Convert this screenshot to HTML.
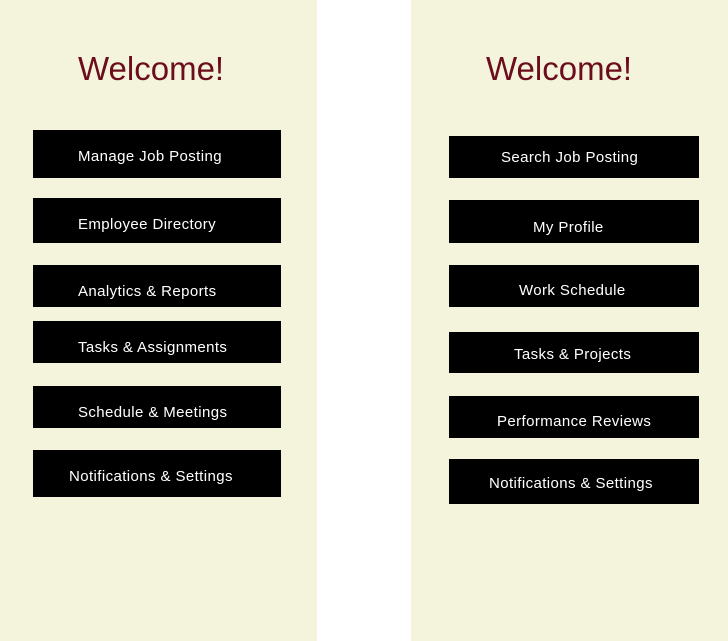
<!DOCTYPE html><html><head><style>
body{margin:0;width:728px;height:641px;background:#fff;position:relative;overflow:hidden;font-family:"Liberation Sans",sans-serif}
.p{position:absolute;top:0;height:641px;background:#f4f4dc}
.w{position:absolute;font-size:33px;color:#6b0d1c;line-height:40px;top:49px}
.b{position:absolute;background:#000}
.t{position:absolute;color:#fff;font-size:15px;line-height:18px;white-space:nowrap;letter-spacing:0.4px}
</style></head><body>
<div class="p" style="left:0;width:317px"></div>
<div class="p" style="left:411px;width:317px"></div>
<div class="w" style="left:78px">Welcome!</div>
<div class="w" style="left:486px">Welcome!</div>
<div class="b" style="left:33px;width:248px;top:130px;height:48px"></div>
<div class="b" style="left:33px;width:248px;top:198px;height:45px"></div>
<div class="b" style="left:33px;width:248px;top:265px;height:42px"></div>
<div class="b" style="left:33px;width:248px;top:321px;height:42px"></div>
<div class="b" style="left:33px;width:248px;top:386px;height:42px"></div>
<div class="b" style="left:33px;width:248px;top:450px;height:47px"></div>
<div class="t" style="left:78px;top:148px">Manage Job Posting</div>
<div class="t" style="left:78px;top:216px">Employee Directory</div>
<div class="t" style="left:78px;top:283px">Analytics &amp; Reports</div>
<div class="t" style="left:78px;top:339px">Tasks &amp; Assignments</div>
<div class="t" style="left:78px;top:404px">Schedule &amp; Meetings</div>
<div class="t" style="left:69px;top:468px">Notifications &amp; Settings</div>
<div class="b" style="left:449px;width:250px;top:136px;height:42px"></div>
<div class="b" style="left:449px;width:250px;top:200px;height:43px"></div>
<div class="b" style="left:449px;width:250px;top:265px;height:42px"></div>
<div class="b" style="left:449px;width:250px;top:332px;height:41px"></div>
<div class="b" style="left:449px;width:250px;top:396px;height:42px"></div>
<div class="b" style="left:449px;width:250px;top:459px;height:45px"></div>
<div class="t" style="left:501px;top:149px">Search Job Posting</div>
<div class="t" style="left:533px;top:219px">My Profile</div>
<div class="t" style="left:519px;top:282px">Work Schedule</div>
<div class="t" style="left:514px;top:346px">Tasks &amp; Projects</div>
<div class="t" style="left:497px;top:413px">Performance Reviews</div>
<div class="t" style="left:489px;top:475px">Notifications &amp; Settings</div>
</body></html>
